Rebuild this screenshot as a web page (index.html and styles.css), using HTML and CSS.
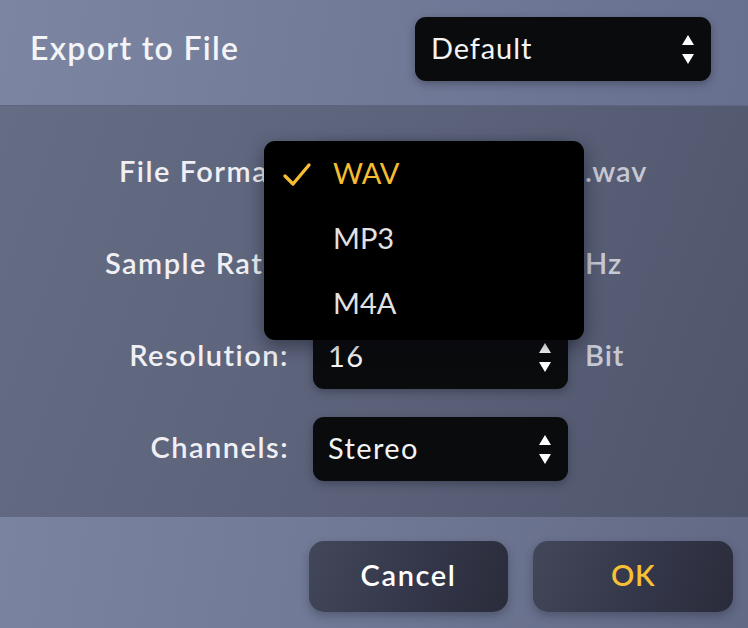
FILE: index.html
```html
<!DOCTYPE html>
<html>
<head>
<meta charset="utf-8">
<link rel="stylesheet" href="styles.css">
</head>
<body>
<div class="dialog">
  <header class="head">
    <h1 class="title">Export to File</h1>
    <div class="select select-preset">
      <span class="value">Default</span>
      <svg class="arrows" width="12" height="29" viewBox="0 0 12 29"><path d="M6 0 L12 10 L0 10 Z" fill="#fff"/><path d="M0 19 L12 19 L6 29 Z" fill="#fff"/></svg>
    </div>
  </header>
  <main class="body">
    <div class="form">
      <div class="row">
        <label class="label">File Format:</label>
        <div class="select"><span class="value"></span>
          <svg class="arrows" width="12" height="29" viewBox="0 0 12 29"><path d="M6 0 L12 10 L0 10 Z" fill="#fff"/><path d="M0 19 L12 19 L6 29 Z" fill="#fff"/></svg></div>
        <span class="suffix">.wav</span>
      </div>
      <div class="row">
        <label class="label">Sample Rate:</label>
        <div class="select"><span class="value"></span>
          <svg class="arrows" width="12" height="29" viewBox="0 0 12 29"><path d="M6 0 L12 10 L0 10 Z" fill="#fff"/><path d="M0 19 L12 19 L6 29 Z" fill="#fff"/></svg></div>
        <span class="suffix">Hz</span>
      </div>
      <div class="row">
        <label class="label">Resolution:</label>
        <div class="select"><span class="value">16</span>
          <svg class="arrows" width="12" height="29" viewBox="0 0 12 29"><path d="M6 0 L12 10 L0 10 Z" fill="#fff"/><path d="M0 19 L12 19 L6 29 Z" fill="#fff"/></svg></div>
        <span class="suffix">Bit</span>
      </div>
      <div class="row">
        <label class="label">Channels:</label>
        <div class="select"><span class="value">Stereo</span>
          <svg class="arrows" width="12" height="29" viewBox="0 0 12 29"><path d="M6 0 L12 10 L0 10 Z" fill="#fff"/><path d="M0 19 L12 19 L6 29 Z" fill="#fff"/></svg></div>
        <span class="suffix"></span>
      </div>
    </div>
    <ul class="menu">
      <li class="item selected">
        <svg class="check" width="30" height="26" viewBox="0 0 30 26"><path d="M3 14 L11 22 L27 3" fill="none" stroke="#f6bd33" stroke-width="3.4" stroke-linecap="round" stroke-linejoin="round"/></svg>
        <span>WAV</span>
      </li>
      <li class="item"><span>MP3</span></li>
      <li class="item"><span>M4A</span></li>
    </ul>
  </main>
  <footer class="foot">
    <button class="btn">Cancel</button>
    <button class="btn btn-ok">OK</button>
  </footer>
</div>
</body>
</html>
```

FILE: styles.css
```css
* { box-sizing: border-box; }
html, body {
  margin: 0;
  padding: 0;
  width: 748px;
  height: 628px;
  overflow: hidden;
}
body {
  font-family: "Lato", "Liberation Sans", sans-serif;
  color: #f2f2f5;
}
.dialog {
  width: 748px;
  height: 628px;
  display: flex;
  flex-direction: column;
}
.head {
  height: 105px;
  flex: none;
  display: flex;
  align-items: flex-start;
  justify-content: space-between;
  padding: 17px 37px 0 30px;
  background: linear-gradient(100deg, #7c86a2 0%, #717a97 50%, #687090 100%);
}
.title {
  margin: 0;
  font-size: 32px;
  font-weight: 600;
  line-height: 62px;
  color: #f4f4f7;
  letter-spacing: 1.3px;
}
.select {
  width: 255px;
  height: 64px;
  border-radius: 11px;
  background: #0a0b0d;
  display: flex;
  align-items: center;
  justify-content: space-between;
  padding: 0 17px 0 15px;
  box-shadow: 0 3px 8px rgba(20, 22, 35, 0.35);
}
.select-preset {
  width: 296px;
  padding-left: 16px;
}
.value {
  font-size: 29px;
  color: #f4f4f6;
  font-weight: 400;
  letter-spacing: 0.9px;
  padding-bottom: 4px;
}
.row .value { letter-spacing: 1.4px; }
.arrows { display: block; }
.body {
  flex: 1;
  position: relative;
  background: linear-gradient(110deg, #656d85 0%, #5a6179 55%, #4f556b 100%);
  border-top: 1px solid #5d6480;
  padding: 35px 0 36px 0;
}
.form {
  display: flex;
  flex-direction: column;
  gap: 28px;
}
.row {
  display: grid;
  grid-template-columns: 288px 255px auto;
  align-items: center;
}
.label {
  text-align: right;
  font-size: 29px;
  font-weight: 600;
  color: #f0f0f4;
  letter-spacing: 1.5px;
  margin-right: -1px;
  padding-bottom: 5px;
}
.row .select { margin-left: 25px; }
.suffix {
  margin-left: 42px;
  font-size: 29px;
  font-weight: 600;
  color: #c6c9d3;
  letter-spacing: 1px;
  padding-bottom: 5px;
}
.menu {
  position: absolute;
  left: 264px;
  top: 35px;
  width: 320px;
  height: 199px;
  margin: 0;
  padding: 0;
  list-style: none;
  background: #000;
  border-radius: 11px;
  box-shadow: 0 6px 18px rgba(10, 12, 20, 0.45);
}
.item {
  height: 65px;
  display: flex;
  align-items: center;
  padding-left: 69px;
  padding-bottom: 2px;
  position: relative;
  font-size: 29px;
  color: #e2e2e4;
}
.item.selected { color: #f6bd33; }
.check {
  position: absolute;
  left: 18px;
  top: 21px;
}
.foot {
  height: 111px;
  flex: none;
  display: flex;
  justify-content: flex-end;
  gap: 25px;
  padding: 24px 15px 0 0;
  background: linear-gradient(100deg, #7a84a0 0%, #6f7894 50%, #626985 100%);
}
.btn {
  width: 200px;
  height: 71px;
  border: none;
  border-radius: 15px;
  background: linear-gradient(110deg, #43475a 0%, #34374a 55%, #2a2c3a 100%);
  box-shadow: 0 4px 10px rgba(20, 22, 35, 0.3);
  font-family: "Lato", "Liberation Sans", sans-serif;
  font-size: 29px;
  font-weight: 600;
  color: #ffffff;
  padding: 0 0 5px 0;
  letter-spacing: 1.6px;
}
.btn:first-child { width: 199px; }
.btn-ok { color: #f8c035; letter-spacing: 0.5px; }
```
